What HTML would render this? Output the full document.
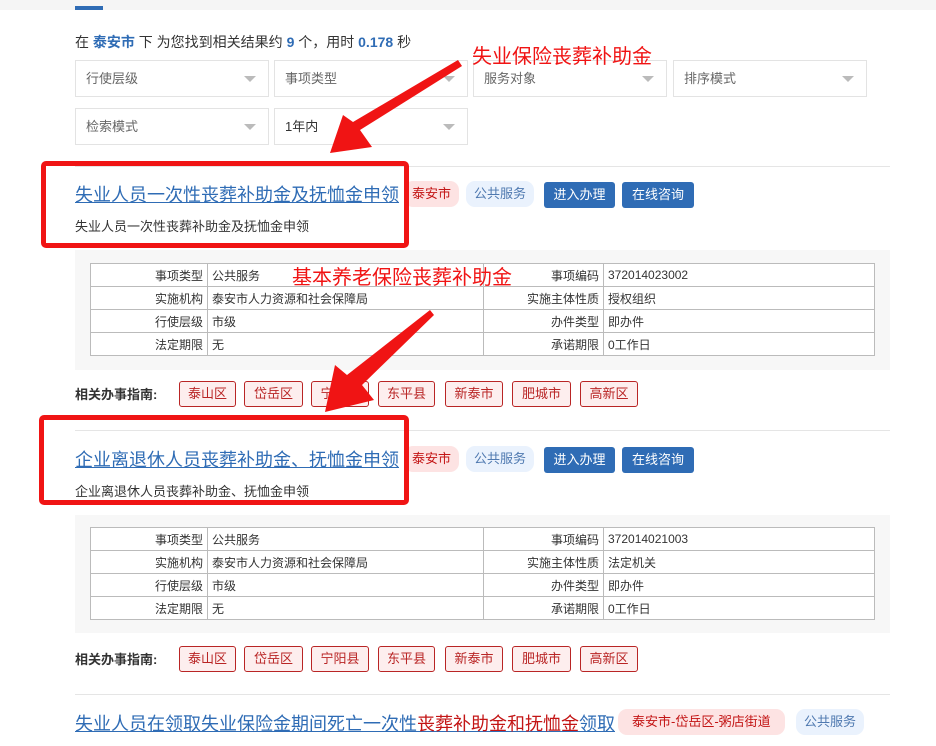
<!DOCTYPE html>
<html><head><meta charset="utf-8"><style>
*{margin:0;padding:0;box-sizing:border-box}
body{width:936px;height:746px;overflow:hidden;background:#fff;font-family:"Liberation Sans","Noto Sans CJK SC",sans-serif;color:#333;position:relative;font-size:13px}
.a{position:absolute}
.top{left:0;top:0;width:936px;height:10px;background:#f5f5f5}
.sel{position:absolute;height:37px;border:1px solid #e3e3e3;background:#fff;color:#666;font-size:13px;line-height:35px;padding-left:10px}
.sel:after{content:"";position:absolute;right:12px;top:15px;border-left:6px solid transparent;border-right:6px solid transparent;border-top:6px solid #bbb}
.hr{position:absolute;left:75px;width:815px;height:1px;background:#e5e5e5}
.title{position:absolute;left:75px;font-size:18px;color:#2f6cb5;text-decoration:underline;white-space:nowrap}
.tag{position:absolute;height:26px;line-height:26px;font-size:13px;border-radius:9px;padding:0 8px;white-space:nowrap}
.pink{background:#fde3e3;color:#c31515}
.lb{background:#eaf2fd;color:#4f79b0}
.btn{position:absolute;height:26px;line-height:26px;font-size:13px;background:#2f6cb5;color:#fff;border-radius:3px;text-align:center}
.sub{position:absolute;left:75px;font-size:13px;color:#333}
.box{position:absolute;left:75px;width:815px;background:#f7f7f7}
table{position:absolute;left:90px;width:785px;border-collapse:collapse;font-size:12px;background:#fff}
td{border:1px solid #bbb;height:23px;padding:0 4px;color:#333}
td.l{text-align:right}
.g{position:absolute;left:75px;font-weight:bold;font-size:13px}
.gb{position:absolute;height:26px;line-height:24px;border:1px solid #b92525;background:#fdeeee;color:#b92525;border-radius:3px;text-align:center;font-size:13px}
.red{position:absolute;border:5px solid #f01414;border-radius:5px}
.ann{position:absolute;color:#f01414;font-size:20px;white-space:nowrap}
b.bl{color:#2f6cb5}
</style></head><body>
<div class="a top"></div>
<div class="a" style="left:75px;top:6px;width:28px;height:4px;background:#2f6cb5"></div>
<div class="a" style="left:75px;top:32px;font-size:14px;white-space:nowrap">在 <b class="bl">泰安市</b> 下 为您找到相关结果约 <b class="bl">9</b> 个，用时 <b class="bl">0.178</b> 秒</div>
<div class="sel" style="left:75px;top:60px;width:194px">行使层级</div>
<div class="sel" style="left:274px;top:60px;width:194px">事项类型</div>
<div class="sel" style="left:473px;top:60px;width:194px">服务对象</div>
<div class="sel" style="left:673px;top:60px;width:194px">排序模式</div>
<div class="sel" style="left:75px;top:108px;width:194px">检索模式</div>
<div class="sel" style="left:274px;top:108px;width:194px;color:#333">1年内</div>
<div class="hr" style="top:166px"></div>

<div class="title" style="top:181px">失业人员一次性丧葬补助金及抚恤金申领</div>
<div class="tag pink" style="left:404px;top:181px">泰安市</div>
<div class="tag lb" style="left:466px;top:181px">公共服务</div>
<div class="btn" style="left:544px;top:182px;width:71px">进入办理</div>
<div class="btn" style="left:622px;top:182px;width:72px">在线咨询</div>
<div class="sub" style="top:216px">失业人员一次性丧葬补助金及抚恤金申领</div>
<div class="box" style="top:250px;height:120px"></div>
<table style="top:263px"><colgroup><col style="width:117px"><col style="width:276px"><col style="width:120px"><col></colgroup>
<tr><td class="l">事项类型</td><td>公共服务</td><td class="l">事项编码</td><td>372014023002</td></tr>
<tr><td class="l">实施机构</td><td>泰安市人力资源和社会保障局</td><td class="l">实施主体性质</td><td>授权组织</td></tr>
<tr><td class="l">行使层级</td><td>市级</td><td class="l">办件类型</td><td>即办件</td></tr>
<tr><td class="l">法定期限</td><td>无</td><td class="l">承诺期限</td><td>0工作日</td></tr></table>
<div class="g" style="top:384px">相关办事指南:</div>
<div class="gb" style="left:179px;top:381px;width:57px">泰山区</div>
<div class="gb" style="left:244px;top:381px;width:59px">岱岳区</div>
<div class="gb" style="left:311px;top:381px;width:58px">宁阳县</div>
<div class="gb" style="left:378px;top:381px;width:57px">东平县</div>
<div class="gb" style="left:445px;top:381px;width:58px">新泰市</div>
<div class="gb" style="left:512px;top:381px;width:59px">肥城市</div>
<div class="gb" style="left:580px;top:381px;width:58px">高新区</div>
<div class="hr" style="top:430px"></div>

<div class="title" style="top:446px">企业离退休人员丧葬补助金、抚恤金申领</div>
<div class="tag pink" style="left:404px;top:446px">泰安市</div>
<div class="tag lb" style="left:466px;top:446px">公共服务</div>
<div class="btn" style="left:544px;top:447px;width:71px">进入办理</div>
<div class="btn" style="left:622px;top:447px;width:72px">在线咨询</div>
<div class="sub" style="top:481px">企业离退休人员丧葬补助金、抚恤金申领</div>
<div class="box" style="top:515px;height:118px"></div>
<table style="top:527px"><colgroup><col style="width:117px"><col style="width:276px"><col style="width:120px"><col></colgroup>
<tr><td class="l">事项类型</td><td>公共服务</td><td class="l">事项编码</td><td>372014021003</td></tr>
<tr><td class="l">实施机构</td><td>泰安市人力资源和社会保障局</td><td class="l">实施主体性质</td><td>法定机关</td></tr>
<tr><td class="l">行使层级</td><td>市级</td><td class="l">办件类型</td><td>即办件</td></tr>
<tr><td class="l">法定期限</td><td>无</td><td class="l">承诺期限</td><td>0工作日</td></tr></table>
<div class="g" style="top:649px">相关办事指南:</div>
<div class="gb" style="left:179px;top:646px;width:57px">泰山区</div>
<div class="gb" style="left:244px;top:646px;width:59px">岱岳区</div>
<div class="gb" style="left:311px;top:646px;width:58px">宁阳县</div>
<div class="gb" style="left:378px;top:646px;width:57px">东平县</div>
<div class="gb" style="left:445px;top:646px;width:58px">新泰市</div>
<div class="gb" style="left:512px;top:646px;width:59px">肥城市</div>
<div class="gb" style="left:580px;top:646px;width:58px">高新区</div>
<div class="hr" style="top:694px"></div>

<div class="title" style="top:710px">失业人员在领取失业保险金期间死亡一次性<span style="color:#c31515">丧葬补助金和抚恤金</span>领取</div>
<div class="tag pink" style="left:618px;top:709px;padding:0 14px">泰安市-岱岳区-粥店街道</div>
<div class="tag lb" style="left:796px;top:709px">公共服务</div>

<div class="red" style="left:41px;top:161px;width:368px;height:87px"></div>
<div class="red" style="left:39px;top:415px;width:370px;height:90px"></div>
<div class="ann" style="left:472px;top:40px">失业保险丧葬补助金</div>
<div class="ann" style="left:292px;top:261px">基本养老保险丧葬补助金</div>
<svg class="a" style="left:0;top:0" width="936" height="746">
<polygon fill="#f01414" points="458,60 462,66 360,130 372,147 330,153 343,115 353,122"/>
<polygon fill="#f01414" points="430,310 434,315 362,385 374,400 325,412 335,365 347,375"/>
</svg>
</body></html>
